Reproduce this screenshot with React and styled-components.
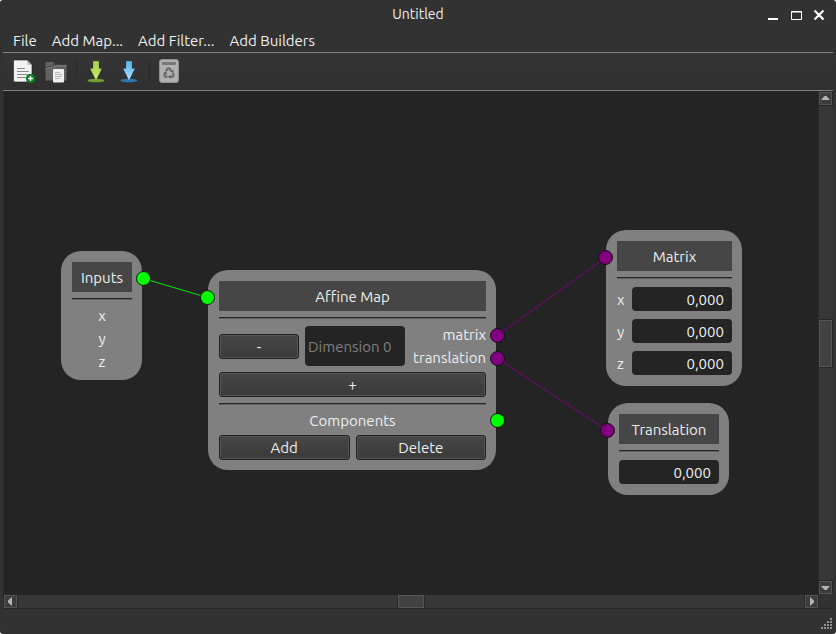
import React from "react";
import styled, { createGlobalStyle } from "styled-components";

const GlobalStyle = createGlobalStyle`
  * { box-sizing: border-box; }
  body {
    margin: 0;
    background: #fff;
    font: 15px/17px "Ubuntu", "Noto Sans", sans-serif;
    color: #eee;
  }
  button, input { font: inherit; color: inherit; margin: 0; }
`;

const Window = styled.div`
  display: flex;
  flex-direction: column;
  min-height: 100vh;
  padding: 0 3px;
  background: #323232;
  border-radius: 3px;
  overflow: hidden;
`;

const TitleBar = styled.header`
  display: grid;
  grid-template-columns: 1fr auto 1fr;
  align-items: center;
  height: 28px;
`;

const Title = styled.h1`
  grid-column: 2;
  margin: 0;
  font-size: 14px;
  font-weight: 400;
`;

const WindowControls = styled.div`
  justify-self: end;
  display: flex;
  gap: 7px;
  padding-right: 8px;
`;

const PlainButton = styled.button`
  display: block;
  padding: 0;
  border: 0;
  background: none;
  svg { display: block; }
`;

const MenuBar = styled.nav`
  display: flex;
  gap: 15px;
  height: 24px;
  padding: 1px 10px 0;
`;

const ToolBar = styled.div`
  display: flex;
  align-items: center;
  gap: 9px;
  height: 39px;
  padding: 0 8px 2px;
  border-top: 1px solid #808080;
  border-bottom: 1px solid #808080;
  background: linear-gradient(#353535, #303030);
`;

const ToolSeparator = styled.span`
  width: 1px;
  height: 20px;
  margin: 0 -2px 0 -1px;
  background: #292929;
`;

const Workspace = styled.main`
  flex: 1;
  display: grid;
  grid-template-columns: 1fr 15px;
  grid-template-rows: 1fr 14px;
  border-bottom: 1px solid #282828;
`;

const Canvas = styled.div`
  position: relative;
  overflow: hidden;
  background: #242424;
  border-left: 1px solid #2c2c2c;
`;

const ScrollBar = styled.div`
  display: flex;
  flex-direction: ${(p) => (p.$vertical ? "column" : "row")};
  justify-content: space-between;
  padding: ${(p) => (p.$vertical ? "1px 1px 0 0" : "0 0 0 1px")};
  background: #373737;
  border-top: ${(p) => (p.$vertical ? 0 : "1px solid #242424")};
  border-left: ${(p) => (p.$vertical ? "1px solid #2b2b2b" : 0)};
`;

const ScrollButton = styled(PlainButton)`
  width: 13px;
  height: 13px;
  border: 1px solid #555;
  background: #3c3c3c;
  outline: 1px solid #272727;
`;

const ScrollThumb = styled.span`
  width: ${(p) => (p.$vertical ? "13px" : "26px")};
  height: ${(p) => (p.$vertical ? "47px" : "13px")};
  border: 1px solid #555;
  background: #414141;
  outline: 1px solid #272727;
`;

const Corner = styled.div`
  background: #323232;
  border-left: 1px solid #292929;
`;

const StatusBar = styled.footer`
  display: flex;
  justify-content: flex-end;
  align-items: flex-end;
  height: 25px;
  padding-bottom: 4px;
`;

const Edges = styled.svg`
  position: absolute;
  inset: 0;
  width: 100%;
  height: 100%;
`;

const Port = styled.span`
  position: absolute;
  left: ${(p) => p.$x}px;
  top: ${(p) => p.$y}px;
  width: 15px;
  height: 15px;
  border: 1px solid #101010;
  border-radius: 50%;
  background: ${(p) => p.$color};
`;

const NodeCard = styled.section`
  position: absolute;
  left: ${(p) => p.$x}px;
  top: ${(p) => p.$y}px;
  width: ${(p) => p.$width}px;
  display: flex;
  flex-direction: column;
  gap: 6px;
  padding: 11px 10px 10px 11px;
  border-radius: 20px;
  background: #808080;
`;

const NodeTitle = styled.h2`
  display: flex;
  align-items: center;
  justify-content: center;
  height: 30px;
  margin: 0;
  background: #464646;
  font-size: 15px;
  font-weight: 400;
`;

const Rule = styled.hr`
  width: 100%;
  height: 3px;
  margin: 0;
  border: 0;
  background: linear-gradient(#242424 1px, #606060 1px 2px, transparent 2px);
`;

const Label = styled.span`
  text-align: ${(p) => p.$align || "center"};
`;

const Row = styled.div`
  display: flex;
  align-items: center;
  gap: 6px;
`;

const LabelStack = styled.div`
  flex: 1;
  display: flex;
  flex-direction: column;
  gap: 6px;
  white-space: nowrap;
`;

const PushButton = styled.button`
  flex: ${(p) => (p.$width ? "none" : "1 1 0")};
  width: ${(p) => (p.$width ? p.$width + "px" : "auto")};
  height: 25px;
  padding: 0;
  border: 1px solid #202020;
  border-radius: 3px;
  background: linear-gradient(#474747, #3a3a3a);
  box-shadow: inset 0 0 0 1px #565656;
`;

const Field = styled.input`
  width: 100px;
  height: ${(p) => (p.$tall ? 40 : 24)}px;
  padding: ${(p) => (p.$tall ? "0 3px" : "0 8px")};
  border: 0;
  border-radius: 4px;
  background: #242424;
  text-align: ${(p) => (p.$tall ? "left" : "right")};
  &::placeholder { color: #808080; opacity: 1; }
`;

const FieldRow = styled.label`
  display: flex;
  align-items: center;
  justify-content: space-between;
  height: 26px;
`;

const GREEN = "#00ff00";
const PURPLE = "#800080";

const ports = [
  { id: "inputs-out", x: 132, y: 180, color: GREEN },
  { id: "affine-in", x: 196, y: 199, color: GREEN },
  { id: "affine-matrix", x: 486, y: 237, color: PURPLE },
  { id: "affine-translation", x: 486, y: 260, color: PURPLE },
  { id: "affine-components", x: 486, y: 322, color: GREEN },
  { id: "matrix-in", x: 594, y: 159, color: PURPLE },
  { id: "translation-in", x: 596, y: 332, color: PURPLE },
];

const edges = [
  ["inputs-out", "affine-in", "#00f000"],
  ["affine-matrix", "matrix-in", "#800080"],
  ["affine-translation", "translation-in", "#800080"],
];

const findPort = (id) => ports.find((p) => p.id === id);

const NewIcon = () => (
  <svg width="24" height="26" viewBox="0 0 24 26">
    <path d="M4 2h12l5 5v15.500q0 1.500-1.500 1.500h-15.500q-1.500 0-1.500-1.500v-19q0-1.500 1-1.500z" fill="#f3f3f3" stroke="#191919" strokeWidth=".6" />
    <path d="M16 2v3.500q0 1.500 1.500 1.500h3.500z" fill="#c5c5c5" />
    <path d="M6 10.500h8M6 13.500h12M6 16.500h12M6 19.500h9" stroke="#898989" />
    <circle cx="19.500" cy="20.500" r="4.600" fill="#078020" />
    <path d="M17 20.500h5M19.500 18v5" stroke="#fff" strokeWidth="1.300" />
  </svg>
);

const OpenIcon = () => (
  <svg width="24" height="26" viewBox="0 0 24 26">
    <path d="M1 5q0-1.500 1.500-1.500h6q1.500 0 2 2h11q1.500 0 1.500 1.500v15q0 1-1 1h-20q-1 0-1-1z" fill="#626262" stroke="#292929" strokeWidth=".7" />
    <path d="M1.500 9.500l6-1 3-2h12" fill="none" stroke="#3d3d3d" />
    <path d="M1.500 10.500l6.500-1 2.500-1.500h12" fill="none" stroke="#838383" strokeWidth=".8" />
    <rect x="9" y="11" width="11" height="13.500" rx="1" fill="#f0f0f0" />
    <path d="M11 14.500h5M11 16.500h7M11 18.500h7M11 20.500h5" stroke="#a7a7a7" strokeWidth=".8" />
  </svg>
);

const ArrowIcon = ({ id, top, bottom, base }) => (
  <svg width="24" height="26" viewBox="0 0 24 26">
    <linearGradient id={id} x1="0" y1="0" x2="0" y2="1">
      <stop offset="0" stopColor={top} />
      <stop offset="1" stopColor={bottom} />
    </linearGradient>
    <ellipse cx="12" cy="22.500" rx="8.500" ry="1.800" fill={base} />
    <path d="M9 3h6v7.500h3l-6 12-6-12h3z" fill={`url(#${id})`} stroke="#252525" strokeOpacity=".35" strokeWidth=".5" />
  </svg>
);

const TrashIcon = () => (
  <svg width="24" height="26" viewBox="0 0 24 26">
    <rect x="2.500" y="1.500" width="19" height="23" rx="2.500" fill="#b0b0b0" stroke="#909090" />
    <rect x="5" y="4" width="14" height="3" rx="1" fill="#777" />
    <g fill="none" stroke="#666" strokeWidth="1.900">
      <path d="M8.700 13.500l2-3h2l1.800 2.900" />
      <path d="M15.500 14.700l1.200 2.200-1 1.800h-3" />
      <path d="M10.500 18.700H8.200l-1-1.800 1.300-2.200" />
    </g>
    <path d="M16.500 11.500v3.200l-3.200-1zM13.300 16.500v4.400l-2.300-2.200zM6.300 14.700l3.200-1 .7 3z" fill="#666" />
  </svg>
);

const arrowPaths = {
  up: "M1 7h9l-3.500-4h-2z",
  down: "M1 4h9l-3.500 4h-2z",
  left: "M7 1v9l-4-3.500v-2z",
  right: "M4 1v9l4-3.500v-2z",
};

const Scroller = ({ direction }) => (
  <ScrollButton aria-label={`Scroll ${direction}`}>
    <svg width="11" height="11">
      <path d={arrowPaths[direction]} fill="#b4b4b4" />
    </svg>
  </ScrollButton>
);

const Grip = () => (
  <svg width="12" height="12" fill="#909090" aria-hidden="true">
    {[[9, 0], [6, 3], [9, 3], [3, 6], [6, 6], [9, 6], [0, 9], [3, 9], [6, 9], [9, 9]].map(([x, y]) => (
      <rect key={`${x}-${y}`} x={x} y={y} width="2" height="2" />
    ))}
  </svg>
);

export default function App() {
  return (
    <>
      <GlobalStyle />
      <Window>
        <TitleBar>
          <Title>Untitled</Title>
          <WindowControls>
            <PlainButton aria-label="Minimize">
              <svg width="16" height="14"><path d="M1 11h10v2H1z" fill="#fff" /></svg>
            </PlainButton>
            <PlainButton aria-label="Maximize">
              <svg width="14" height="14"><path d="M1.500 4.500h10v8h-10zM1 5h11" fill="none" stroke="#fff" /></svg>
            </PlainButton>
            <PlainButton aria-label="Close">
              <svg width="14" height="14"><path d="M3.500 3.500l9 9M12.500 3.500l-9 9" stroke="#fff" strokeWidth="2.200" /></svg>
            </PlainButton>
          </WindowControls>
        </TitleBar>
        <MenuBar>
          {["File", "Add Map...", "Add Filter...", "Add Builders"].map((name) => (
            <PlainButton key={name}>{name}</PlainButton>
          ))}
        </MenuBar>
        <ToolBar>
          <PlainButton aria-label="New"><NewIcon /></PlainButton>
          <PlainButton aria-label="Open"><OpenIcon /></PlainButton>
          <ToolSeparator />
          <PlainButton aria-label="Save">
            <ArrowIcon id="save" top="#a4d14a" bottom="#cdea6c" base="#739d2e" />
          </PlainButton>
          <PlainButton aria-label="Save as">
            <ArrowIcon id="saveAs" top="#55b5ea" bottom="#a9e0ff" base="#2c79b5" />
          </PlainButton>
          <ToolSeparator />
          <PlainButton aria-label="Delete selection"><TrashIcon /></PlainButton>
        </ToolBar>
        <Workspace>
          <Canvas>
            <NodeCard $x={57} $y={160} $width={81}>
              <NodeTitle>Inputs</NodeTitle>
              <Rule />
              <Label>x</Label>
              <Label>y</Label>
              <Label>z</Label>
            </NodeCard>
            <NodeCard $x={204} $y={179} $width={288}>
              <NodeTitle>Affine Map</NodeTitle>
              <Rule />
              <Row>
                <PushButton $width={80}>-</PushButton>
                <Field $tall placeholder="Dimension 0" aria-label="Dimension 0" />
                <LabelStack>
                  <Label $align="right">matrix</Label>
                  <Label $align="right">translation</Label>
                </LabelStack>
              </Row>
              <Row><PushButton>+</PushButton></Row>
              <Rule />
              <Label>Components</Label>
              <Row>
                <PushButton>Add</PushButton>
                <PushButton>Delete</PushButton>
              </Row>
            </NodeCard>
            <NodeCard $x={602} $y={139} $width={136}>
              <NodeTitle>Matrix</NodeTitle>
              <Rule />
              {["x", "y", "z"].map((axis) => (
                <FieldRow key={axis}>
                  {axis}
                  <Field defaultValue="0,000" />
                </FieldRow>
              ))}
            </NodeCard>
            <NodeCard $x={604} $y={312} $width={121}>
              <NodeTitle>Translation</NodeTitle>
              <Rule />
              <FieldRow>
                <Field defaultValue="0,000" aria-label="Translation" />
              </FieldRow>
            </NodeCard>
            <Edges>
              {edges.map(([from, to, color]) => {
                const a = findPort(from);
                const b = findPort(to);
                return (
                  <line key={from} x1={a.x + 7.5} y1={a.y + 7.5} x2={b.x + 7.5} y2={b.y + 7.5} stroke={color} />
                );
              })}
            </Edges>
            {ports.map((p) => (
              <Port key={p.id} $x={p.x} $y={p.y} $color={p.color} />
            ))}
          </Canvas>
          <ScrollBar $vertical>
            <Scroller direction="up" />
            <ScrollThumb $vertical />
            <Scroller direction="down" />
          </ScrollBar>
          <ScrollBar>
            <Scroller direction="left" />
            <ScrollThumb />
            <Scroller direction="right" />
          </ScrollBar>
          <Corner />
        </Workspace>
        <StatusBar><Grip /></StatusBar>
      </Window>
    </>
  );
}
